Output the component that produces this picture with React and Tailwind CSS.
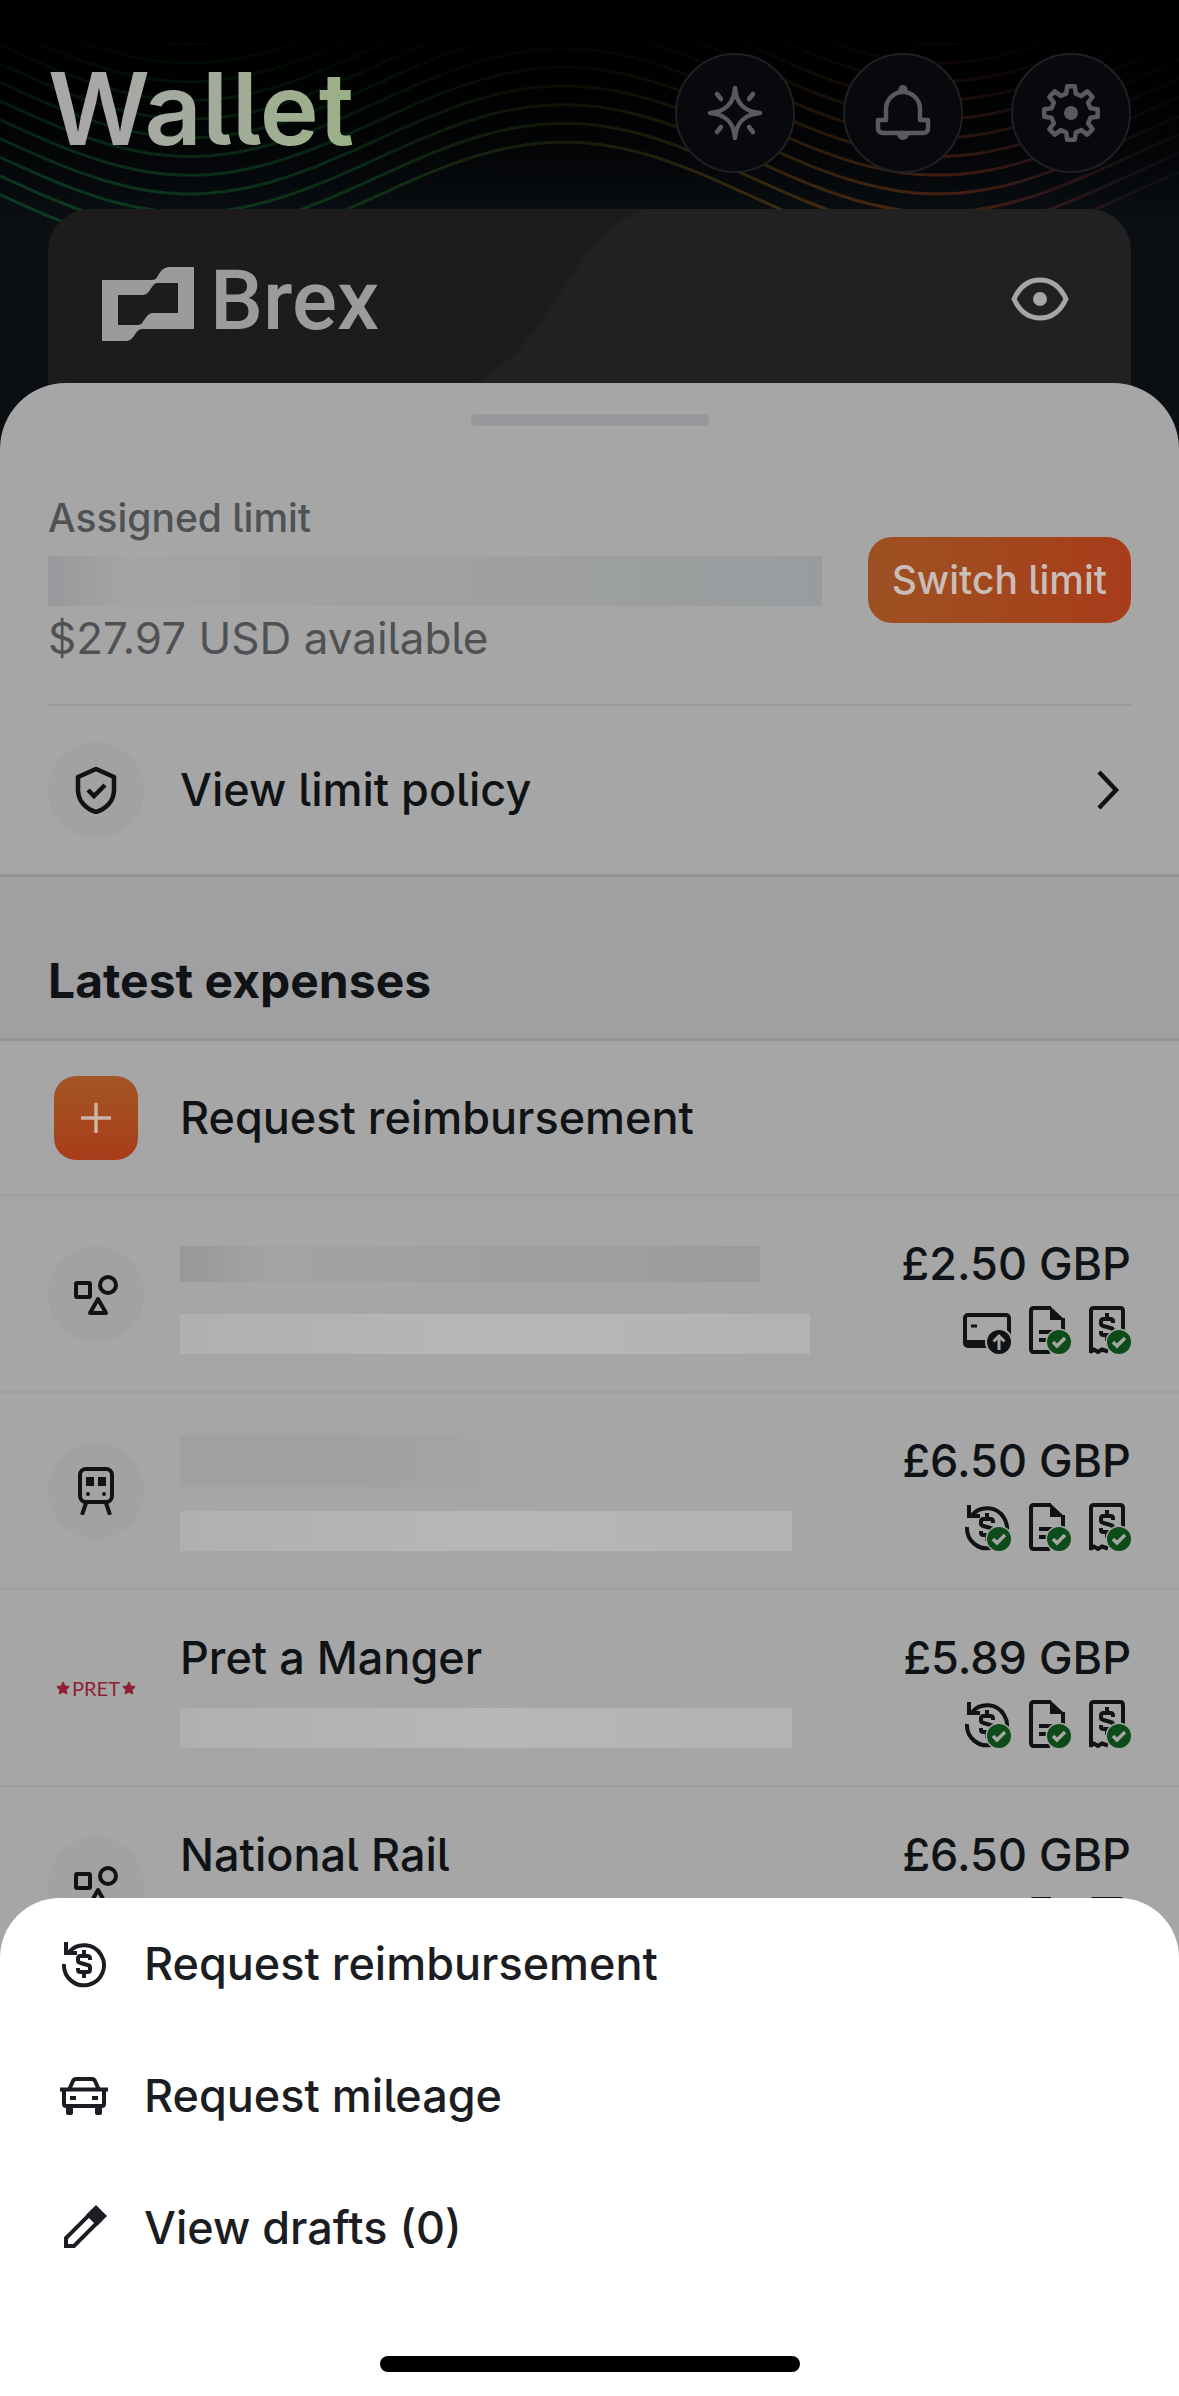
import React from 'react';
import { FaStar } from 'react-icons/fa6';

// evenly stacked sine lines behind the wallet header
const waves = Array.from({ length: 12 }, (_, i) => {
  const points = [];
  for (let x = 0; x <= 1200; x += 15) {
    const y = 196 - i * 18.7 + 54 * Math.cos(((x - 190) * Math.PI) / 374);
    points.push(`${x} ${y.toFixed(1)}`);
  }
  return `M${points.join('L')}`;
});

const gear = (() => {
  const points = [];
  for (let i = 0; i < 8; i++) {
    const mid = i * 45 - 90;
    [
      [-14, 20],
      [-8, 27],
      [8, 27],
      [14, 20],
    ].forEach(([offset, r]) => {
      const a = ((mid + offset) * Math.PI) / 180;
      points.push(`${(30 + r * Math.cos(a)).toFixed(1)} ${(30 + r * Math.sin(a)).toFixed(1)}`);
    });
  }
  return `M${points.join('L')}Z`;
})();

const WaveBackground = () => (
  <svg
    className="absolute inset-x-0 top-0 w-full h-[260px]"
    viewBox="0 0 1179 260"
    preserveAspectRatio="none"
    fill="none"
    aria-hidden="true"
  >
    <defs>
      <linearGradient id="wave" gradientUnits="userSpaceOnUse" x1="0" y1="0" x2="1179" y2="0">
        <stop offset="0" stopColor="#0b3d22" />
        <stop offset="0.3" stopColor="#0c3517" />
        <stop offset="0.48" stopColor="#242c0e" />
        <stop offset="0.66" stopColor="#402c0e" />
        <stop offset="0.8" stopColor="#4c2310" />
        <stop offset="0.9" stopColor="#30181c" />
        <stop offset="1" stopColor="#0c1014" />
      </linearGradient>
      <linearGradient id="waveFade" x1="0" y1="0" x2="0" y2="1">
        <stop offset="0" stopColor="#000" />
        <stop offset="0.12" stopColor="#000" />
        <stop offset="0.8" stopColor="#fff" />
      </linearGradient>
      <mask id="waveMask">
        <rect width="1179" height="260" fill="url(#waveFade)" />
      </mask>
    </defs>
    <g stroke="url(#wave)" strokeWidth="3" mask="url(#waveMask)">
      {waves.map((d) => (
        <path key={d} d={d} />
      ))}
    </g>
  </svg>
);

const SparkleIcon = () => (
  <svg className="size-14" viewBox="0 0 56 56" fill="none" stroke="currentColor" strokeWidth="4.5" strokeLinecap="round" strokeLinejoin="round">
    <path d="M28 3C29 18 38 27 53 28C38 29 29 38 28 53C27 38 18 29 3 28C18 27 27 18 28 3Z" />
    <path d="M10 9l4 5M46 9l-4 5M10 47l4-5M46 47l-4-5" />
  </svg>
);

const BellIcon = () => (
  <svg className="size-14" viewBox="0 0 56 56" fill="none" stroke="currentColor" strokeWidth="4.5" strokeLinejoin="round">
    <path d="M11 35V24a17 17 0 0 1 34 0v11h8v8q0 5-5 5H8q-5 0-5-5v-8Z" />
    <path d="M24 6a4 4 0 0 1 8 0ZM22 49h12a6 6 0 0 1-12 0Z" fill="currentColor" stroke="none" />
    <circle cx="28" cy="4.5" r="4.5" fill="currentColor" stroke="none" />
  </svg>
);

const GearIcon = () => (
  <svg className="size-[60px]" viewBox="0 0 60 60" fill="none" stroke="currentColor" strokeWidth="4.5" strokeLinejoin="round">
    <path d={gear} />
    <circle cx="30" cy="30" r="7" fill="currentColor" stroke="none" />
  </svg>
);

const EyeIcon = () => (
  <svg className="w-[58px] h-11" viewBox="0 0 58 44" fill="none" stroke="currentColor" strokeWidth="5">
    <path d="M3 22C9 9 18 3 29 3s20 6 26 19C49 35 40 41 29 41S9 35 3 22Z" strokeLinejoin="round" />
    <circle cx="29" cy="22" r="7" fill="currentColor" stroke="none" />
  </svg>
);

const BrexMark = () => (
  <svg className="w-[92px] h-[74px]" viewBox="0 0 92 74" fill="currentColor" aria-hidden="true">
    <path
      fillRule="evenodd"
      d="M0 13H50C54 13 55 10 57 7C60 2 63 0 68 0H92V62H40C36 62 34 66 32 69C29 73 27 74 23 74H0ZM16 28V58H36C40 58 41 54 43 52C46 47 48 46 52 46H76V16H55C52 16 50 20 48 23C46 26 44 28 39 28Z"
    />
  </svg>
);

const Icon = ({ children, width = '4' }) => (
  <svg className="size-12 shrink-0" viewBox="0 0 48 48" fill="none" stroke="currentColor" strokeWidth={width} aria-hidden="true">
    {children}
  </svg>
);

const ShieldIcon = () => (
  <Icon width="4.5">
    <path d="M24 3L42 11V24C42 35 34 43 24 46C14 43 6 35 6 24V11Z" strokeLinejoin="round" />
    <path d="M16 24l6 6 11-11" />
  </Icon>
);

const ShapesIcon = () => (
  <Icon>
    <rect x="4" y="13" width="14" height="14" rx="1" />
    <circle cx="36" cy="15" r="8" />
    <path d="M26 29l8 14H18Z" strokeLinejoin="round" />
  </Icon>
);

const TrainIcon = () => (
  <Icon>
    <rect x="8" y="2" width="32" height="33" rx="6" />
    <path d="M14 10h8v9h-8zM26 10h8v9h-8z" fill="currentColor" stroke="none" />
    <circle cx="16" cy="27" r="2" fill="currentColor" stroke="none" />
    <circle cx="32" cy="27" r="2" fill="currentColor" stroke="none" />
    <path d="M14 36l-4 12M34 36l4 12" />
  </Icon>
);

const Dollar = ({ y = 0 }) => (
  <path
    transform={`translate(0 ${y})`}
    d="M24 10v5M24 33v5M30 20v-1.500q0-2.500-2.500-2.500h-7q-2.500 0-2.500 2.500v2q0 2 2.500 2.500l7 2q2.500.5 2.500 2.500v2q0 2.500-2.500 2.500h-7q-2.500 0-2.500-2.500v-1.500"
  />
);

const CheckBadge = () => (
  <g stroke="none">
    <circle cx="36" cy="36" r="13.500" fill="#a6a6a6" />
    <circle cx="36" cy="36" r="12" fill="#0d4c18" />
    <path d="M30 36l4 4 8-8" fill="none" stroke="#a6a6a6" strokeWidth="3.5" />
  </g>
);

const RefundLoop = () => (
  <>
    <path d="M9 12A20 20 0 1 1 4 24" />
    <path d="M6 2v11h11" />
  </>
);

const CardUpIcon = () => (
  <Icon>
    <rect x="2" y="9" width="44" height="31" rx="3" />
    <path d="M2 34h24v7H3zM8 18.500h6v3H8z" fill="currentColor" stroke="none" />
    <circle cx="36" cy="36" r="14" fill="#a6a6a6" stroke="none" />
    <circle cx="36" cy="36" r="12" fill="currentColor" stroke="none" />
    <path d="M36 44V30M30.500 35.500L36 30l5.500 5.500" stroke="#a6a6a6" strokeWidth="3" />
  </Icon>
);

const RefundDoneIcon = () => (
  <Icon>
    <RefundLoop />
    <Dollar />
    <CheckBadge />
  </Icon>
);

const MemoDoneIcon = () => (
  <Icon>
    <path d="M28 2H11q-3 0-3 3v38q0 3 3 3h16M40 12v14" />
    <path d="M27 0l15 14H27Z" fill="currentColor" stroke="none" />
    <path d="M16 26h14M16 34h10" />
    <CheckBadge />
  </Icon>
);

const ReceiptDoneIcon = () => (
  <Icon>
    <path d="M8 47V5q0-3 3-3h26q3 0 3 3v24" />
    <path d="M7 46l4-2.500 4 2.500 4-2.500 6 2" />
    <Dollar y={-3} />
    <CheckBadge />
  </Icon>
);

const RefundIcon = () => (
  <Icon>
    <RefundLoop />
    <Dollar />
  </Icon>
);

const CarIcon = () => (
  <Icon>
    <path d="M9 18l4-9q1-2 3-2h16q2 0 3 2l4 9" />
    <path d="M0 17.500h48" />
    <path d="M4 17v15q0 2 2 2h36q2 0 2-2V17" />
    <path d="M10 24h6v4h-6zM32 24h6v4h-6zM6 34h7v7q0 2-2 2H8q-2 0-2-2zM35 34h7v7q0 2-2 2h-3q-2 0-2-2z" fill="currentColor" stroke="none" />
  </Icon>
);

const PencilIcon = () => (
  <Icon>
    <path d="M6 42v-8L32 8l8 8-26 26Z" />
    <path d="M36 1l11 11-10 10-11-11Z" fill="currentColor" stroke="none" />
  </Icon>
);

const PretLogo = () => (
  <div className="w-24 shrink-0 flex items-center justify-center gap-0.5 text-[#8f1f35] font-[Lato,sans-serif]">
    <FaStar className="size-3.5" />
    <span className="text-xl leading-6">PRET</span>
    <FaStar className="size-3.5" />
  </div>
);

const RoundIcon = ({ children }) => (
  <div className="size-24 shrink-0 rounded-full bg-[#a2a2a3] flex items-center justify-center">{children}</div>
);

const expenses = [
  {
    id: 1,
    logo: <RoundIcon><ShapesIcon /></RoundIcon>,
    titleBar: 'w-[580px] h-9 bg-linear-to-r from-[#98989b] from-0% via-[#a3a3a4] via-15% to-[#9c9c9d]',
    noteBar: 'w-[630px]',
    amount: '£2.50 GBP',
    status: <CardUpIcon />,
  },
  {
    id: 2,
    logo: <RoundIcon><TrainIcon /></RoundIcon>,
    titleBar: 'w-[340px] h-[52px] bg-linear-to-r from-[#a0a0a0] from-50% to-[#a6a6a6]',
    noteBar: 'w-[612px]',
    amount: '£6.50 GBP',
    status: <RefundDoneIcon />,
  },
  {
    id: 3,
    logo: <PretLogo />,
    title: 'Pret a Manger',
    noteBar: 'w-[612px]',
    amount: '£5.89 GBP',
    status: <RefundDoneIcon />,
  },
  {
    id: 4,
    logo: <RoundIcon><ShapesIcon /></RoundIcon>,
    title: 'National Rail',
    noteBar: 'w-[612px]',
    amount: '£6.50 GBP',
    status: <RefundDoneIcon />,
  },
];

const ExpenseRow = ({ expense }) => (
  <li className="h-[197px] px-12 flex gap-9 border-b-2 border-[#9f9f9f]">
    <div className="flex items-center">{expense.logo}</div>
    <div className="flex-1 min-w-0 pt-10">
      <div className="h-14 flex items-center">
        {expense.title ? (
          <span className="text-[45px] leading-14 font-medium">{expense.title}</span>
        ) : (
          <div className={expense.titleBar} />
        )}
      </div>
      <div className={`${expense.noteBar} mt-[22px] h-10 max-w-full bg-linear-to-r from-[#b0b0b2] via-[#b7b7b7] to-[#b3b3b5]`} />
    </div>
    <div className="shrink-0 pt-10 flex flex-col items-end">
      <span className="text-[45px] leading-14 font-medium">{expense.amount}</span>
      <div className="mt-3.5 flex gap-3">
        {expense.status}
        <MemoDoneIcon />
        <ReceiptDoneIcon />
      </div>
    </div>
  </li>
);

const HeaderButton = ({ label, children }) => (
  <button
    aria-label={label}
    title={label}
    className="size-[120px] rounded-full border-2 border-[#1e2024] bg-[#07090d] text-[#595a5f] flex items-center justify-center cursor-pointer"
  >
    {children}
  </button>
);

const MenuItem = ({ icon, label }) => (
  <button className="h-[132px] w-full px-[60px] flex items-center gap-9 text-left cursor-pointer">
    {icon}
    <span className="text-[45px] leading-14 font-medium">{label}</span>
  </button>
);

const App = () => {
  return (
    <div className="h-screen overflow-hidden relative bg-linear-to-b from-black to-[#0b0f13] to-[220px] font-[Inter,sans-serif] [font-feature-settings:'cv05'] text-[#101315]">
      <WaveBackground />

      <header className="relative px-12 pt-[53px] flex items-center justify-between">
        <h1 className="pb-2 text-[100px] leading-[112px] font-semibold bg-linear-to-r from-[#a8a8a8] from-20% to-[#9bb086] bg-clip-text text-transparent">
          Wallet
        </h1>
        <div className="flex gap-12">
          <HeaderButton label="Assistant"><SparkleIcon /></HeaderButton>
          <HeaderButton label="Notifications"><BellIcon /></HeaderButton>
          <HeaderButton label="Settings"><GearIcon /></HeaderButton>
        </div>
      </header>

      <section className="relative mx-12 mt-9 h-60 rounded-t-[42px] overflow-hidden bg-[#1d1b1b]">
        <svg className="absolute inset-0 size-full" viewBox="0 0 1083 240" preserveAspectRatio="none" aria-hidden="true">
          <path d="M597 0C560 14 538 44 512 84C486 124 470 150 425 176L400 240H1083V0Z" fill="#212121" />
        </svg>
        <div className="relative px-[54px] pt-[58px] flex items-start justify-between">
          <div className="flex gap-4 text-[#9b9b9b]">
            <BrexMark />
            <span className="text-[84px] leading-[68px] font-medium font-[Roboto,sans-serif]">Brex</span>
          </div>
          <button aria-label="Show card details" className="py-2.5 px-2 text-[#a6a6a6] cursor-pointer">
            <EyeIcon />
          </button>
        </div>
      </section>

      <main className="relative -mt-[66px] pt-[31px] rounded-t-[66px] bg-[#a6a6a6]">
        <div className="mx-auto w-[238px] h-3 rounded-sm bg-[#98989c]" />

        <section className="mx-12 pt-[70px] pb-10 flex items-center justify-between border-b-2 border-[#99999c]">
          <div className="text-[#4f5255]">
            <p className="text-[39px] leading-11 font-medium">Assigned limit</p>
            <div className="mt-4 mb-1.5 w-[774px] h-[50px] bg-linear-to-r from-[#98999c] from-0% via-[#a3a4a4] via-10% to-[#999c9e]" />
            <p className="text-[44px] leading-[52px]">$27.97 USD available</p>
          </div>
          <button className="h-[86px] px-6 rounded-3xl bg-linear-to-r from-[#9d5123] to-[#a83c1a] text-[#c9bdb8] text-[39px] font-medium whitespace-nowrap cursor-pointer">
            Switch limit
          </button>
        </section>

        <button className="h-[168px] w-full px-12 flex items-center gap-9 text-left cursor-pointer">
          <RoundIcon><ShieldIcon /></RoundIcon>
          <span className="flex-1 text-[45px] leading-14 font-medium">View limit policy</span>
          <Icon width="4.5">
            <path d="M16 6l17 18-17 18" />
          </Icon>
        </button>

        <div className="px-12 pt-[74px] pb-[27px] border-y-3 border-[#949496] bg-[#a0a0a2]">
          <h2 className="text-[48px] leading-[60px] font-bold">Latest expenses</h2>
        </div>

        <button className="h-[155px] w-full px-12 flex items-center gap-9 border-b-2 border-[#9f9f9f] text-left cursor-pointer">
          <span className="w-24 flex justify-center">
            <span className="size-[84px] rounded-[22px] bg-linear-to-b from-[#a15525] to-[#a83c1a] flex items-center justify-center">
              <svg className="size-8" viewBox="0 0 32 32" stroke="#c9b4a8" strokeWidth="3.5" aria-hidden="true">
                <path d="M16 1v30M1 16h30" />
              </svg>
            </span>
          </span>
          <span className="text-[45px] leading-14 font-medium">Request reimbursement</span>
        </button>

        <ul>
          {expenses.map((expense) => (
            <ExpenseRow key={expense.id} expense={expense} />
          ))}
        </ul>
      </main>

      <div role="dialog" aria-label="Request" className="fixed inset-x-0 bottom-0 rounded-t-[60px] bg-white text-[#1b1d22]">
        <MenuItem icon={<RefundIcon />} label="Request reimbursement" />
        <MenuItem icon={<CarIcon />} label="Request mileage" />
        <MenuItem icon={<PencilIcon />} label="View drafts (0)" />
        <div className="mx-auto mt-[62px] mb-6 w-[420px] h-4 rounded-full bg-black" />
      </div>
    </div>
  );
};

export default App;
